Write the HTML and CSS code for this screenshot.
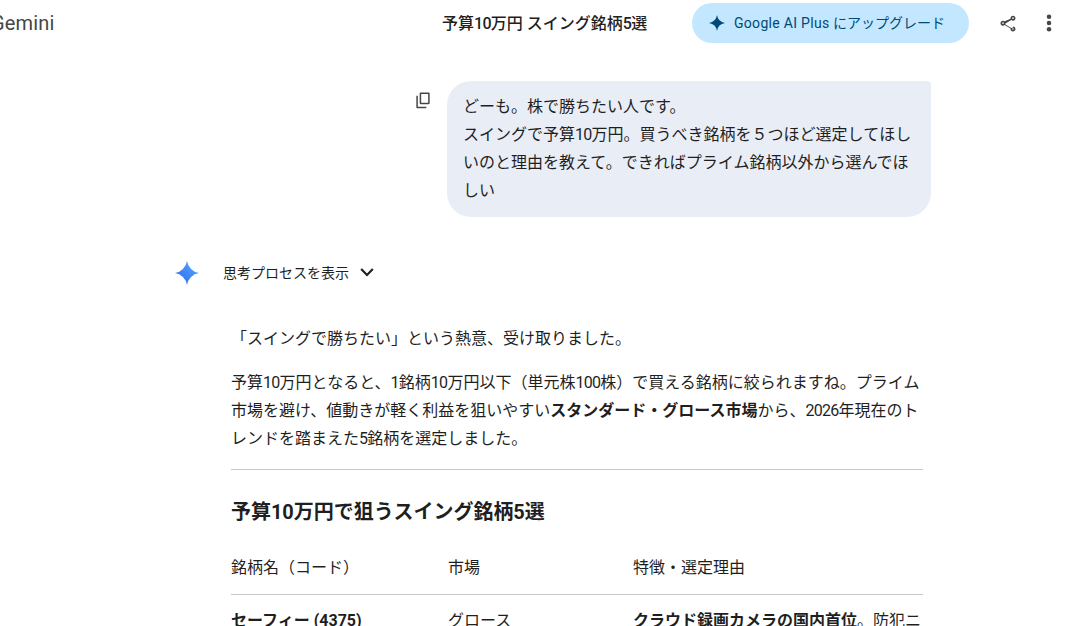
FILE: index.html
```html
<!DOCTYPE html>
<html lang="ja">
<head>
<meta charset="utf-8">
<title>Gemini</title>
<link rel="stylesheet" href="styles.css">
</head>
<body>
<div class="page">
  <header class="topbar">
    <div class="brand">Gemini</div>
    <div class="title">予算<span class="num">10</span>万円 スイング銘柄<span class="num">5</span>選</div>
    <div class="actions">
      <button class="upgrade">
        <svg class="spark-small" viewBox="0 0 24 24"><path d="M12 24A14.304 14.304 0 0 0 0 12 14.304 14.304 0 0 0 12 0a14.304 14.304 0 0 0 12 12 14.304 14.304 0 0 0-12 12"/></svg>
        <span class="upgrade-label"><span class="latin">Google AI Plus</span> にアップグレード</span>
      </button>
      <svg class="icon share" viewBox="0 0 24 24"><path d="M18 16.100c-.8 0-1.400.3-2 .8l-7.100-4.200c.1-.2.1-.5.1-.7s0-.5-.1-.7L16 7.200c.5.5 1.200.8 2 .8 1.700 0 3-1.300 3-3s-1.300-3-3-3-3 1.300-3 3c0 .2 0 .5.1.7L8 8.800C7.500 8.300 6.800 8 6 8c-1.700 0-3 1.300-3 3s1.300 3 3 3c.8 0 1.500-.3 2-.8l7.100 4.200c-.1.2-.1.4-.1.600 0 1.600 1.300 2.900 3 2.900s3-1.300 3-2.900-1.300-2.900-3-2.900zM18 4c.6 0 1 .4 1 1s-.4 1-1 1-1-.4-1-1 .4-1 1-1zM6 12c-.6 0-1-.4-1-1s.4-1 1-1 1 .4 1 1-.4 1-1 1zm12 7c-.6 0-1-.4-1-1s.4-1 1-1 1 .4 1 1-.4 1-1 1z"/></svg>
      <svg class="icon more" viewBox="0 0 24 24"><circle cx="12" cy="4.600" r="2.700"/><circle cx="12" cy="12" r="2.700"/><circle cx="12" cy="19.400" r="2.700"/></svg>
    </div>
  </header>

  <section class="user-row">
    <svg class="copy" viewBox="0 0 24 24"><path d="M9 3h10a1 1 0 0 1 1 1v12a1 1 0 0 1-1 1H9a1 1 0 0 1-1-1V4a1 1 0 0 1 1-1Zm.8 1.800v10.400h8.400V4.800H9.800Z"/><path d="M4 7h1.800v13.200H16V22H5a1 1 0 0 1-1-1V7Z"/></svg>
    <div class="bubble">どーも。株で勝ちたい人です。<br>スイングで予算<span class="num">10</span>万円。買うべき銘柄を５つほど選定してほしいのと理由を教えて。できればプライム銘柄以外から選んでほしい</div>
  </section>

  <section class="thinking">
    <svg class="spark" viewBox="0 0 24 24">
      <defs><linearGradient id="g" x1="0.1" y1="0.9" x2="0.9" y2="0.1"><stop offset="0" stop-color="#2f6af0"/><stop offset="1" stop-color="#55a6ff"/></linearGradient></defs>
      <path fill="url(#g)" d="M12 24A14.304 14.304 0 0 0 0 12 14.304 14.304 0 0 0 12 0a14.304 14.304 0 0 0 12 12 14.304 14.304 0 0 0-12 12"/>
    </svg>
    <span class="thinking-label">思考プロセスを表示</span>
    <svg class="chev" viewBox="0 0 24 24"><path d="M5 8.500 12 15.500l7-7" /></svg>
  </section>

  <main class="answer">
    <p>「スイングで勝ちたい」という熱意、受け取りました。</p>
    <p>予算<span class="num">10</span>万円となると、<span class="num">1</span>銘柄<span class="num">10</span>万円以下（単元株<span class="num">100</span>株）で買える銘柄に絞られますね。プライム市場を避け、値動きが軽く利益を狙いやすい<b>スタンダード・グロース市場</b>から、<span class="num">2026</span>年現在のトレンドを踏まえた<span class="num">5</span>銘柄を選定しました。</p>
    <hr>
    <h2>予算10万円で狙うスイング銘柄5選</h2>
    <table>
      <thead><tr><th class="c1">銘柄名（コード）</th><th class="c2">市場</th><th>特徴・選定理由</th></tr></thead>
      <tbody><tr><td><b>セーフィー (4375)</b></td><td>グロース</td><td><b>クラウド録画カメラの国内首位</b>。防犯ニ</td></tr></tbody>
    </table>
  </main>
</div>
</body>
</html>
```

FILE: styles.css
```css
* { box-sizing: border-box; }
html, body { margin: 0; height: 100%; overflow: hidden; background: #fff; }
body { font-family: Roboto, "Noto Sans CJK JP", sans-serif; color: #1f1f1f; font-size: 16px; }
.page { width: 1074px; height: 626px; overflow: hidden; }
.num { letter-spacing: -.7px; }

.topbar { display: flex; align-items: center; height: 46px; }
.brand { width: 451px; margin-left: -9px; flex: none; font-size: 20px; color: #444746; letter-spacing: .15px; }
.title { font-size: 16px; font-weight: 500; flex: none; width: 250px; margin-top: -2px; }
.actions { display: flex; align-items: center; }
.upgrade { display: flex; align-items: center; gap: 9px; width: 277px; height: 40px; padding: 0 0 0 17px; border: 0; border-radius: 20px; background: #c2e7ff; color: #004a77; font: inherit; font-size: 14px; }
.upgrade-label { margin-top: -2px; }
.latin { letter-spacing: .3px; }
.spark-small { width: 16px; height: 16px; fill: #004a77; }
.icon { width: 20px; height: 20px; fill: #444746; }
.share { margin: 1px 0 0 29px; }
.more { margin-left: 21px; }

.user-row { display: flex; justify-content: flex-end; align-items: flex-start; gap: 14px; margin-top: 35px; padding-right: 143px; }
.copy { width: 20px; height: 20px; margin-top: 9px; fill: #444746; }
.bubble { width: 484px; padding: 12px 16px; background: #e9eef6; border-radius: 24px 4px 24px 24px; line-height: 28px; }

.thinking { display: flex; align-items: center; height: 24px; margin: 44px 0 0 175px; }
.spark { width: 24px; height: 24px; margin-right: 24px; }
.thinking-label { font-size: 14px; margin-top: -3px; }
.chev { width: 20px; height: 20px; margin: -2px 0 0 8px; fill: none; stroke: #1f1f1f; stroke-width: 2.600; }

.answer { width: 692px; margin: 40px 0 0 231px; }
.answer p { margin: 0 0 16px; line-height: 28px; }
.answer b { font-weight: 700; }
hr { margin: 16px 0 0; border: 0; border-top: 1px solid #c4c7c5; }
h2 { margin: 27px 0 0; font-size: 20px; font-weight: 700; line-height: 30px; letter-spacing: -.04px; }
table { width: 692px; margin-top: 14px; border-collapse: collapse; table-layout: fixed; }
th, td { padding: 0; text-align: left; font-size: 16px; font-weight: 400; line-height: 28px; vertical-align: top; }
th { height: 53px; padding-top: 13px; border-bottom: 1px solid #c4c7c5; }
td { padding-top: 12px; }
.c1 { width: 217px; }
.c2 { width: 185px; }
```
